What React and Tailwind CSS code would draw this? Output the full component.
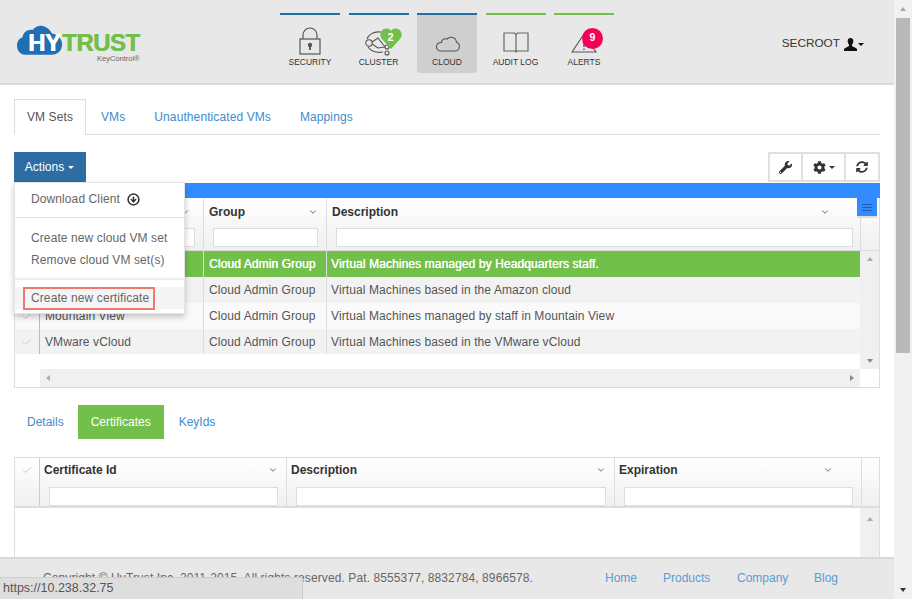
import { ChevronDown, Check, CircleArrowDown } from "lucide-react";
import { FaWrench, FaCog, FaSyncAlt } from "react-icons/fa";

const Lock = () => (
  <svg width="22" height="28" viewBox="0 0 22 28" fill="none" stroke="#555" strokeWidth="1.2">
    <path d="M4 12V8a7 7 0 0 1 14 0v4" />
    <rect x="1" y="12" width="20" height="15" />
    <circle cx="11" cy="18" r="2.2" fill="#555" stroke="none" />
    <path d="M11 19v4" strokeWidth="1.800" />
  </svg>
);

const ClusterIcon = () => (
  <svg width="34" height="32" viewBox="0 0 34 32" fill="none" stroke="#555" strokeWidth="1.1">
    <path d="M5 14c1-4 7-8 13-7 3 .5 5 2 6 4M6 22c3 4 9 6 15 5" />
    <circle cx="7" cy="18" r="3.200" />
    <path d="M10 17l6-4 7 9M10 19l6 4 7-1" />
    <circle cx="25" cy="22" r="2" />
    <circle cx="25" cy="28" r="2" />
  </svg>
);

const CloudIcon = () => (
  <svg width="27" height="17" viewBox="0 0 27 17" fill="none" stroke="#555" strokeWidth="1.1">
    <path d="M6 16h15a4.500 4.500 0 0 0 1.500-8.700A5.500 5.500 0 0 0 13 4 4 4 0 0 0 7.500 7.500 4.300 4.300 0 0 0 6 16z" />
  </svg>
);

const BookIcon = () => (
  <svg width="26" height="21" viewBox="0 0 26 21" fill="none" stroke="#666" strokeWidth="1.2">
    <path d="M12.500 2.500 11.500 1H1v18h11l1 1 1-1h11V1H14.500z" />
    <path d="M13 2v17" />
  </svg>
);

const AlertIcon = () => (
  <svg width="26" height="20" viewBox="0 0 26 20" fill="none" stroke="#555" strokeWidth="1.2">
    <path d="M13 1 1 19h24z" />
    <path d="M13 8v6M13 15.500v1.500" strokeWidth="1.400" />
  </svg>
);

const Heart = () => (
  <svg width="22" height="21" viewBox="0 0 22 21" fill="#72bf4b">
    <path d="M11 21 1.500 10.500C-1 7 .5 1.500 5.500.5 8 0 10 1.200 11 3c1-1.800 3-3 5.500-2.500 5 1 6.500 6.500 4 10z" />
  </svg>
);

const UserGlyph = () => (
  <svg width="13" height="13" viewBox="0 0 13 13" fill="#111">
    <path d="M6.500 0C4.500 0 3.500 1.500 3.700 3.500c.1 1.300.6 2.500 1.300 3.200v1.200C3.500 9 .5 9.500 0 11v2h13v-2c-.5-1.500-3.500-2-5-3.100V6.700c.7-.7 1.200-1.900 1.300-3.200C9.500 1.500 8.500 0 6.500 0z" />
  </svg>
);

const navItems = [
  { label: "SECURITY", icon: <Lock />, line: "border-[#1f6fa8]", pad: "pb-[3px]" },
  { label: "CLUSTER", icon: <ClusterIcon />, line: "border-[#1f6fa8]", pad: "pb-[1px]" },
  { label: "CLOUD", icon: <CloudIcon />, line: "border-[#1f6fa8]", pad: "pb-[6px]", active: true },
  { label: "AUDIT LOG", icon: <BookIcon />, line: "border-[#72bf4b]", pad: "pb-[5px]" },
  { label: "ALERTS", icon: <AlertIcon />, line: "border-[#72bf4b]", pad: "pb-[5px]" },
];

const Logo = () => (
  <div className="relative w-[125px] h-[40px] mt-[24px] ml-[17px] shrink-0">
    <svg className="absolute left-0 top-0" width="46" height="32" viewBox="0 0 50 34" fill="#1f6fb2">
      <path d="M9 33C3 33 0 28 0 23c0-5 3-8 6-9 1-6 6-9 11-8 3-4 9-6 14-3 4 2 6 5 7 7 6 1 11 5 11 12 0 7-5 11-11 11z" />
    </svg>
    <span className="absolute left-[11px] top-[9px] text-[24px] leading-[20px] font-bold text-white tracking-[-0.5px] [text-shadow:0.6px_0_0_white]">HY</span>
    <span className="absolute left-[45px] top-[9px] text-[24px] leading-[20px] font-bold text-[#72bf4b] tracking-[-0.5px] [text-shadow:0.5px_0_0_#72bf4b]">TRUST</span>
    <span className="absolute left-[80px] top-[30px] text-[7.500px] leading-[9px] text-[#666]">KeyControl®</span>
  </div>
);

const Header = () => (
  <header className="h-[85px] shrink-0 bg-[#e8e8e8] border-b-2 border-[#d9d9d9] flex">
    <Logo />
    <nav className="flex gap-[8.500px] ml-[138px] pt-[13px]">
      {navItems.map((item) => (
        <div key={item.label} className={`relative w-[60px] h-[60px] border-t-2 ${item.line} ${item.active ? "bg-[#cfcfcf] rounded-b-sm" : ""}`}>
          <div className={`h-[37px] mt-[6px] flex items-end justify-center ${item.pad}`}>{item.icon}</div>
          <div className="text-[8.500px] leading-[10px] text-center text-[#333] -mt-[1px]">{item.label}</div>
          {item.label === "CLUSTER" && (
            <div className="absolute left-[31px] top-[13px] w-[22px] h-[21px]">
              <Heart />
              <span className="absolute inset-0 text-center text-[11px] leading-[18px] font-bold text-white">2</span>
            </div>
          )}
          {item.label === "ALERTS" && (
            <div className="absolute left-[28px] top-[13px] w-[21px] h-[21px] rounded-full bg-[#f50057] text-white text-center text-[10.500px] leading-[19px] font-bold">9</div>
          )}
        </div>
      ))}
    </nav>
    <div className="ml-auto mr-[30px] mt-[37px] flex items-center h-[14px] text-[11.800px] text-[#333]">
      SECROOT
      <span className="ml-[4px]"><UserGlyph /></span>
      <span className="ml-[1px] mt-[1px] border-x-[3px] border-t-[3px] border-x-transparent border-t-[#111]" />
    </div>
  </header>
);

const FilterInput = () => <div className="h-[19px] bg-white border border-[#ddd]" />;

const rows = [
  { name: "", desc: "Virtual Machines managed by Headquarters staff.", cls: "bg-[#72bf4b] text-white [text-shadow:0.35px_0_0_white] h-[26px]", selected: true },
  { name: "", desc: "Virtual Machines based in the Amazon cloud", cls: "bg-[#f2f2f2] text-[#555] h-[26px]" },
  { name: "Mountain View", desc: "Virtual Machines managed by staff in Mountain View", cls: "bg-[#fafafa] text-[#555] h-[26px]" },
  { name: "VMware vCloud", desc: "Virtual Machines based in the VMware vCloud", cls: "bg-[#f2f2f2] text-[#555] h-[25px]" },
];

const VmGrid = () => (
  <div className="relative border-x border-b border-[#ddd]">
    <div className="h-[15px] bg-[#328bff] -mx-[1px]" />
    <div className="relative h-[53px] bg-gradient-to-b from-white to-[#f0f0f0] border-b border-[#ddd] grid grid-cols-[25px_164px_123px_534px_1fr]">
      <div className="border-r border-[#ccc] flex justify-center pt-[7px]"><Check size={12} className="text-[#ccc]" /></div>
      <div className="border-r border-[#ddd] pt-[6px] pr-[8px]">
        <div className="h-[16px] flex justify-end items-center pr-[5px]"><ChevronDown size={10} className="text-[#555]" /></div>
        <div className="mt-[8px]"><FilterInput /></div>
      </div>
      <div className="border-r border-[#ddd] pl-[5px] pr-[4px] pt-[6px]">
        <div className="flex justify-between items-center pr-[4px]">
          <span className="text-[12px] leading-[16px] font-bold text-[#333]">Group</span>
          <ChevronDown size={10} className="text-[#555]" />
        </div>
        <div className="mt-[8px] mx-[4px]"><FilterInput /></div>
      </div>
      <div className="border-r border-[#ddd] px-[5px] pt-[6px]">
        <div className="flex justify-between items-center pr-[25px]">
          <span className="text-[12px] leading-[16px] font-bold text-[#333]">Description</span>
          <ChevronDown size={10} className="text-[#555]" />
        </div>
        <div className="mt-[8px] mx-[4px] mr-[2px]"><FilterInput /></div>
      </div>
      <div />
      <div className="absolute right-[2px] top-0 w-[20px] h-[20px] bg-[#328bff] border-b-2 border-[#ddd] flex flex-col gap-[2px] items-center justify-center">
        <span className="w-[10px] h-[1px] bg-[#1f5fb0]" />
        <span className="w-[10px] h-[1px] bg-[#1f5fb0]" />
        <span className="w-[10px] h-[1px] bg-[#1f5fb0]" />
      </div>
    </div>
    <div className="flex">
      <div className="flex-1 min-w-0">
        {rows.map((row) => (
          <div key={row.desc} className={`grid grid-cols-[25px_164px_123px_1fr] items-center text-[12px] tracking-[0.1px] ${row.cls}`}>
            <div className="h-full border-r border-[#bbb] flex items-center justify-center">
              <Check size={12} className={row.selected ? "text-white" : "text-[#ccc]"} />
            </div>
            <div className="h-full border-r border-[#ddd] flex items-center pl-[5px]">{row.name}</div>
            <div className="h-full border-r border-[#ddd] flex items-center pl-[5px]">Cloud Admin Group</div>
            <div className="pl-[4px]">{row.desc}</div>
          </div>
        ))}
        <div className="h-[15px] bg-white" />
      </div>
      <div className="w-[19px] bg-[#f0f0f0] flex flex-col items-center justify-between py-[6px]">
        <span className="border-x-[3px] border-b-[4px] border-x-transparent border-b-[#aaa]" />
        <span className="border-x-[3px] border-t-[4px] border-x-transparent border-t-[#888]" />
      </div>
    </div>
    <div className="h-[18px] ml-[25px] mr-[19px] bg-[#f0f0f0] flex items-center justify-between px-[6px]">
      <span className="border-y-[3px] border-r-[4px] border-y-transparent border-r-[#aaa]" />
      <span className="border-y-[3px] border-l-[4px] border-y-transparent border-l-[#888]" />
    </div>
  </div>
);

const certCols = [
  { title: "Certificate Id", pad: "pr-[8px]", inp: "w-[229px]" },
  { title: "Description", pad: "pr-[8px]", inp: "w-[310px]" },
  { title: "Expiration", pad: "pr-[28px]", inp: "w-[229px]" },
];

const CertGrid = () => (
  <div className="mt-[18px] border border-[#ddd] flex-1">
    <div className="h-[50px] bg-gradient-to-b from-white to-[#f0f0f0] border-b-2 border-[#ddd] grid grid-cols-[25px_247px_328px_247px_1fr]">
      <div className="border-r border-[#ccc] flex justify-center pt-[6px]"><Check size={12} className="text-[#ccc]" /></div>
      {certCols.map((col) => (
        <div key={col.title} className="border-r border-[#ddd] pt-[4px]">
          <div className={`flex justify-between items-center pl-[4px] ${col.pad}`}>
            <span className="text-[12px] leading-[16px] font-bold text-[#333]">{col.title}</span>
            <ChevronDown size={10} className="text-[#555]" />
          </div>
          <div className={`mt-[9px] ml-[9px] ${col.inp}`}><FilterInput /></div>
        </div>
      ))}
      <div />
    </div>
    <div className="flex h-[60px]">
      <div className="flex-1 bg-white" />
      <div className="w-[19px] bg-[#f0f0f0] flex justify-center pt-[9px]">
        <span className="h-0 border-x-[3px] border-b-[4px] border-x-transparent border-b-[#aaa]" />
      </div>
    </div>
  </div>
);

const ActionsMenu = () => (
  <div className="absolute left-[14px] top-[97px] w-[171px] h-[132px] bg-white border border-[#e4e4e4] shadow-[0_3px_6px_rgba(0,0,0,0.22)] z-10 text-[12px] tracking-[0.1px] text-[#666]">
    <div className="flex items-center h-[34px] pl-[16px] pb-[2px] gap-[7px]">
      Download Client
      <CircleArrowDown size={13} strokeWidth={2.800} className="text-[#333]" />
    </div>
    <div className="h-[1px] bg-[#e5e5e5]" />
    <div className="pt-[9px] pb-[7px]">
      <div className="pl-[16px] h-[22px] leading-[22px]">Create new cloud VM set</div>
      <div className="pl-[16px] h-[22px] leading-[22px]">Remove cloud VM set(s)</div>
    </div>
    <div className="h-[2px] bg-[#eee]" />
    <div className="mt-[7px] h-[22px] bg-[#f5f5f5]">
      <div className="ml-[8px] w-[132px] h-[23px] leading-[19px] pl-[6px] border-2 border-[#ee7a6f]">Create new certificate</div>
    </div>
  </div>
);

const Footer = () => (
  <footer className="h-[42px] shrink-0 bg-[#e8e8e8] border-t-2 border-[#d9d9d9] flex pt-[12px] pl-[43px] text-[12px] leading-[14px] tracking-[0.1px]">
    <span className="text-[#666]">Copyright © HyTrust Inc. 2011-2015. All rights reserved. Pat. 8555377, 8832784, 8966578.</span>
    <div className="absolute left-[605px] flex text-[#5b9bd5] tracking-normal">
      <a className="w-[58px]">Home</a>
      <a className="w-[74px]">Products</a>
      <a className="w-[77px]">Company</a>
      <a>Blog</a>
    </div>
  </footer>
);

const App = () => (
  <div className="relative w-[912px] h-[599px] overflow-hidden flex bg-white font-['Liberation_Sans',Arial,sans-serif]">
    <div className="w-[894px] h-full flex flex-col relative">
      <Header />
      <main className="flex-1 min-h-0 overflow-hidden relative pl-[14px] pr-[14px] pt-[14px] flex flex-col">
        <ActionsMenu />
        <div className="flex h-[36px] border-b border-[#ddd] text-[12px] tracking-[0.1px] shrink-0">
          <div className="w-[72px] h-[36px] bg-white border border-[#ddd] border-b-white text-[#555] flex items-center justify-center">VM Sets</div>
          <a className="ml-[15px] leading-[36px] text-[#428bca]">VMs</a>
          <a className="ml-[29px] leading-[36px] text-[#428bca]">Unauthenticated VMs</a>
          <a className="ml-[29px] leading-[36px] text-[#428bca]">Mappings</a>
        </div>
        <div className="flex justify-between mt-[17px] mb-[1px] h-[30px] shrink-0">
          <div className="w-[72px] bg-[#2e6da4] text-white text-[12px] flex items-center justify-center gap-[4px] pr-[1px]">
            Actions
            <span className="border-x-[3px] border-t-[3px] border-x-transparent border-t-white" />
          </div>
          <div className="flex border-2 border-[#e0e0e0] text-[#333]">
            <div className="w-[33px] flex items-center justify-center border-r-2 border-[#e0e0e0]"><FaWrench size={13} /></div>
            <div className="w-[43px] flex items-center justify-center gap-[3px] border-r-2 border-[#e0e0e0]">
              <FaCog size={13} />
              <span className="border-x-[3px] border-t-[3px] border-x-transparent border-t-[#333]" />
            </div>
            <div className="w-[32px] flex items-center justify-center"><FaSyncAlt size={12} /></div>
          </div>
        </div>
        <VmGrid />
        <div className="flex h-[34px] mt-[17px] text-[12px] shrink-0">
          <a className="ml-[13px] leading-[34px] text-[#428bca]">Details</a>
          <div className="ml-[14px] w-[86px] bg-[#72bf4b] text-white text-center leading-[34px]">Certificates</div>
          <a className="ml-[15px] leading-[34px] text-[#428bca]">KeyIds</a>
        </div>
        <CertGrid />
      </main>
      <Footer />
    </div>
    <div className="w-[18px] h-full bg-[#f1f1f1] flex flex-col items-center relative">
      <span className="mt-[7px] border-x-[3.500px] border-b-[4px] border-x-transparent border-b-[#a8a8a8]" />
      <div className="mt-[7px] w-[14px] h-[335px] bg-[#b9b9b9]" />
      <span className="mt-auto mb-[7px] border-x-[3.500px] border-t-[4px] border-x-transparent border-t-[#333]" />
    </div>
    <div className="absolute left-0 bottom-0 w-[303px] h-[22px] bg-[#dedede] border-t border-r border-[#ccc] text-[12.500px] leading-[21px] pl-[3px] text-[#555] z-20">
      https://10.238.32.75
    </div>
  </div>
);

export default App;
